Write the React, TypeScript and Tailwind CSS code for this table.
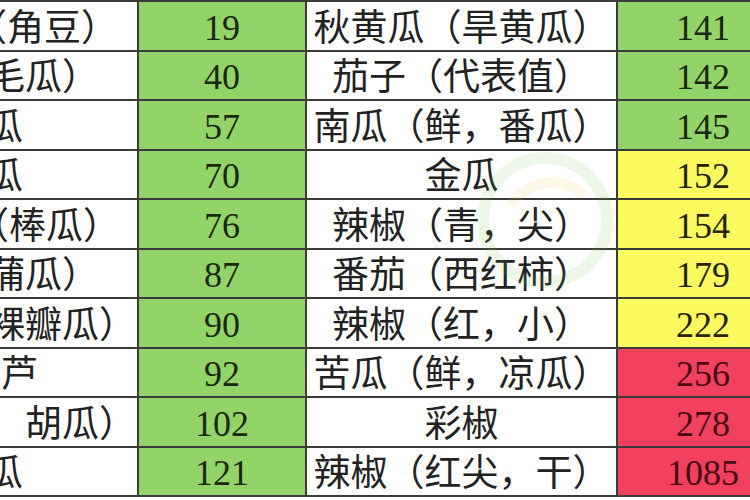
const rows = [
  { left: "豇豆（角豆）", lpad: "pr-[19px]", a: 19, mid: "秋黄瓜（旱黄瓜）", b: 141, tone: "green" },
  { left: "节瓜（毛瓜）", lpad: "pr-[38px]", a: 40, mid: "茄子（代表值）", b: 142, tone: "green" },
  { left: "冬瓜", lpad: "pr-[114px]", a: 57, mid: "南瓜（鲜，番瓜）", b: 145, tone: "green" },
  { left: "佛手瓜", lpad: "pr-[114px]", a: 70, mid: "金瓜", b: 152, tone: "yellow" },
  { left: "丝瓜（棒瓜）", lpad: "pr-[17px]", a: 76, mid: "辣椒（青，尖）", b: 154, tone: "yellow" },
  { left: "瓠瓜（蒲瓜）", lpad: "pr-[38px]", a: 87, mid: "番茄（西红柿）", b: 179, tone: "yellow" },
  { left: "黄瓜（裸瓣瓜）", lpad: "pr-[1px]", a: 90, mid: "辣椒（红，小）", b: 222, tone: "yellow" },
  { left: "葫芦", lpad: "pr-[99px]", a: 92, mid: "苦瓜（鲜，凉瓜）", b: 256, tone: "red" },
  { left: "黄瓜　胡瓜）", lpad: "pr-[1px]", a: 102, mid: "彩椒", b: 278, tone: "red" },
  { left: "西葫芦瓜", lpad: "pr-[114px]", a: 121, mid: "辣椒（红尖，干）", b: 1085, tone: "red" },
];

const toneCell: Record<string, string> = {
  green: "bg-[#93d468] text-[#1a2810]",
  yellow: "bg-[#fbfa5e] text-[#24240e]",
  red: "bg-[#f1415e] text-[#480814]",
};

const cjk = "font-['Liberation_Serif','Noto_Sans_CJK_SC',serif]";
const num = "font-['Liberation_Serif',serif]";

export default function App() {
  return (
    <div className="relative w-[750px] h-[500px] overflow-hidden bg-white">
      <div className="grid grid-cols-[139px_168px_311px_170px] auto-rows-[49.5px] border-t-2 border-[#3b3b3b] w-[788px]">
        {rows.map((r, i) => (
          <div key={i} className="contents">
            <div
              className={`flex items-center justify-end overflow-hidden border-r-2 border-b-2 border-[#3b3b3b] bg-white pt-[5px] text-[37px] leading-none text-[#222] whitespace-nowrap ${cjk} ${r.lpad}`}
            >
              <span className="shrink-0">{r.left}</span>
            </div>
            <div
              className={`flex items-center justify-center border-r-2 border-b-2 border-[#3b3b3b] bg-[#93d468] pt-[4px] text-[36px] leading-none text-[#1a2810] ${num}`}
            >
              {r.a}
            </div>
            <div
              className={`flex items-center justify-center overflow-hidden border-r-2 border-b-2 border-[#3b3b3b] bg-white pt-[5px] text-[37px] leading-none text-[#222] whitespace-nowrap ${cjk}`}
            >
              {r.mid}
            </div>
            <div
              className={`flex items-center justify-center border-b-2 border-[#3b3b3b] pt-[4px] text-[36px] leading-none ${num} ${toneCell[r.tone]}`}
            >
              {r.b}
            </div>
          </div>
        ))}
      </div>

      {/* faint watermark */}
      <svg
        className="pointer-events-none absolute left-[470px] top-[135px] opacity-[0.12]"
        width="150"
        height="170"
        viewBox="0 0 150 170"
      >
        <circle cx="75" cy="85" r="62" fill="none" stroke="#6fbf4a" strokeWidth="12" />
        <path d="M40 70 Q75 30 115 60" fill="none" stroke="#e9c43a" strokeWidth="10" />
      </svg>
    </div>
  );
}
